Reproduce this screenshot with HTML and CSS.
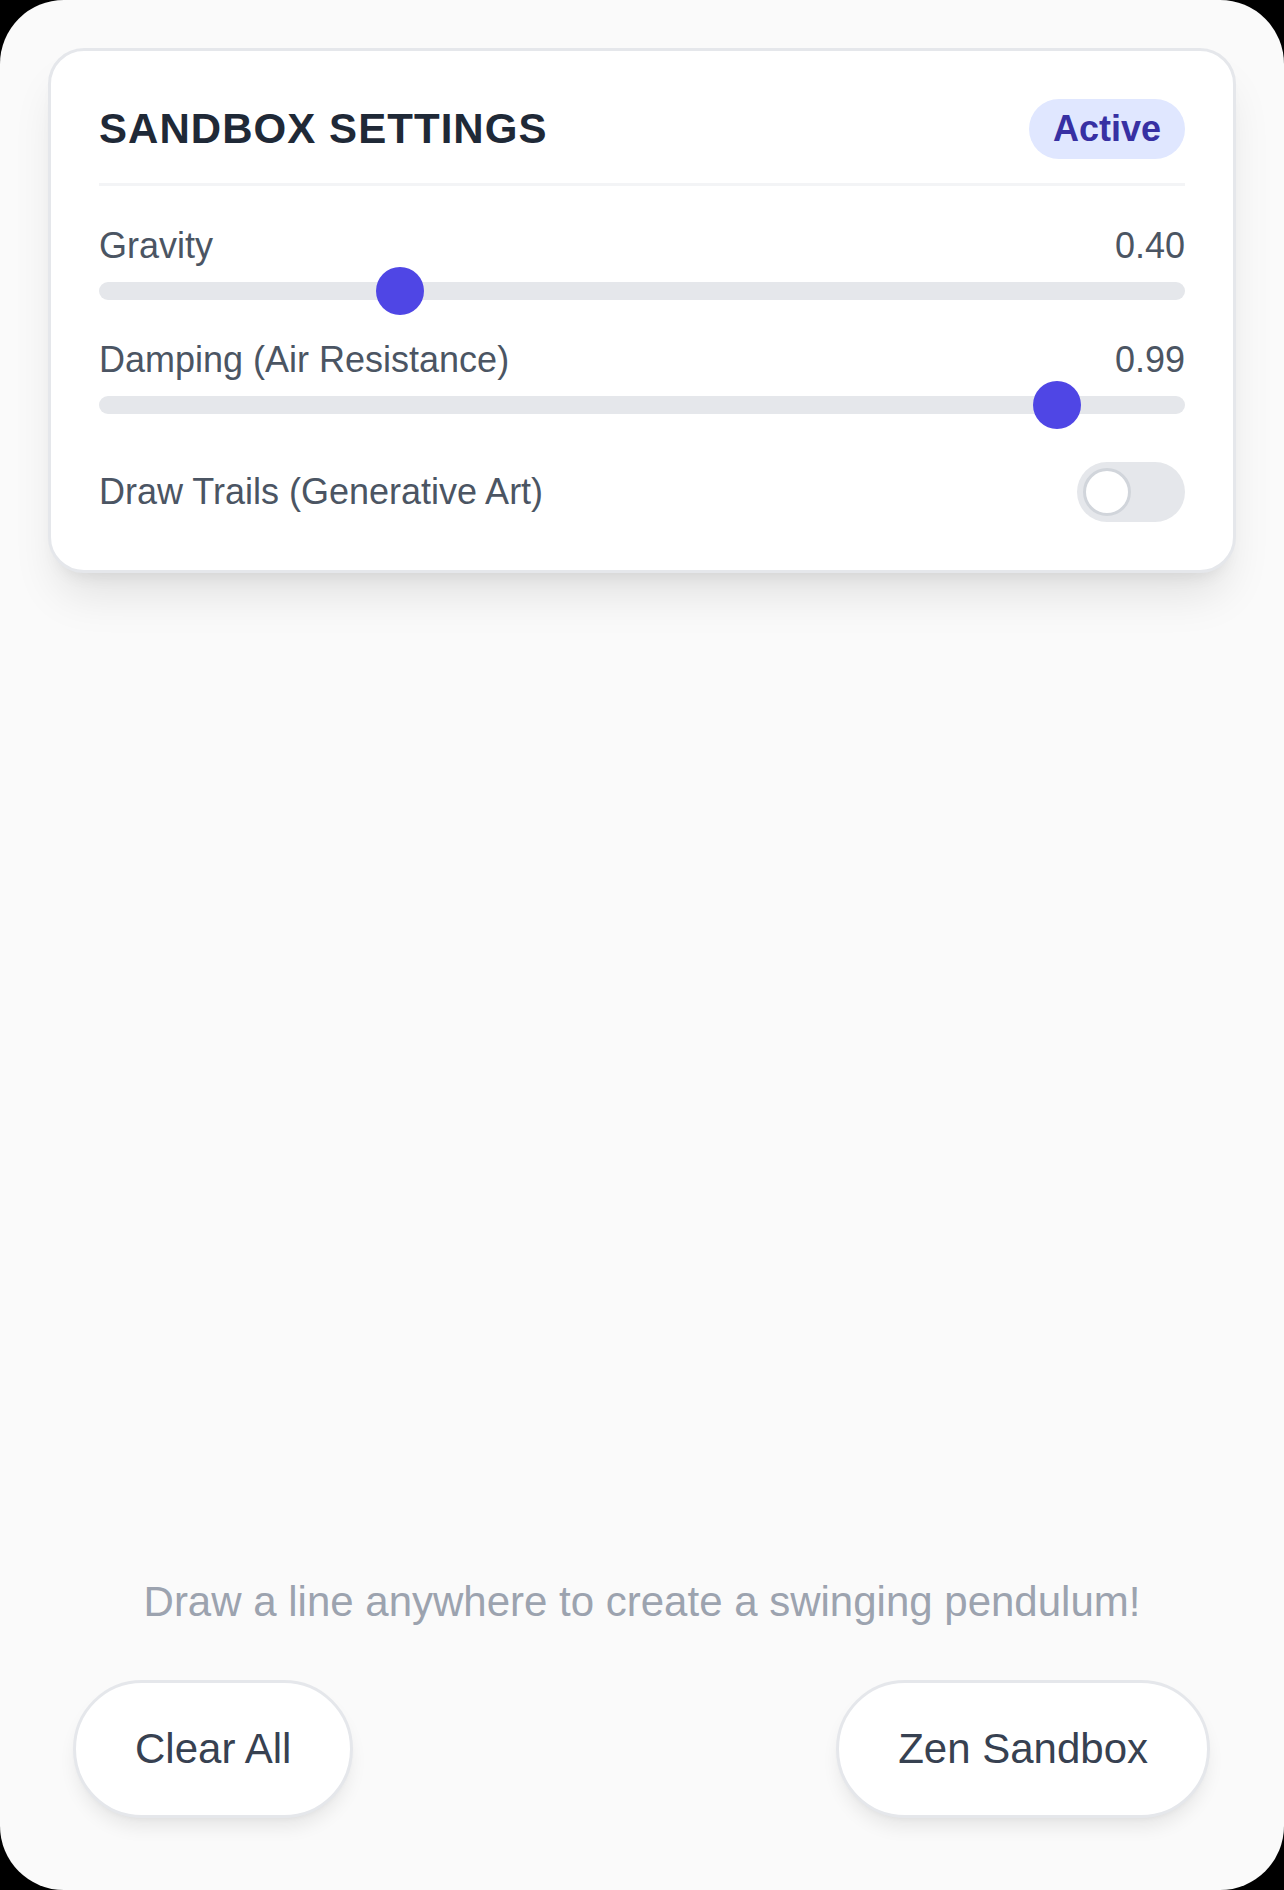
FILE: index.html
```html
<!DOCTYPE html>
<html lang="en">
<head>
<meta charset="utf-8">
<title>Zen Sandbox</title>
<link rel="stylesheet" href="styles.css">
</head>
<body>
<div class="screen">
  <div class="panel-wrap">
    <section class="panel">
      <header class="panel-header">
        <h1 class="panel-title">SANDBOX SETTINGS</h1>
        <span class="badge">Active</span>
      </header>
      <div class="settings">
        <div class="setting">
          <div class="setting-row">
            <span class="setting-label">Gravity</span>
            <span class="setting-value">0.40</span>
          </div>
          <div class="slider">
            <div class="slider-thumb" style="left: calc((100% - 48px) * 0.2667);"></div>
          </div>
        </div>
        <div class="setting">
          <div class="setting-row">
            <span class="setting-label">Damping (Air Resistance)</span>
            <span class="setting-value">0.99</span>
          </div>
          <div class="slider">
            <div class="slider-thumb" style="left: calc((100% - 48px) * 0.9);"></div>
          </div>
        </div>
        <div class="toggle-row">
          <span class="setting-label">Draw Trails (Generative Art)</span>
          <div class="toggle"><div class="toggle-knob"></div></div>
        </div>
      </div>
    </section>
  </div>
  <div class="spacer"></div>
  <p class="hint">Draw a line anywhere to create a swinging pendulum!</p>
  <div class="actions">
    <button class="pill-btn">Clear All</button>
    <button class="pill-btn">Zen Sandbox</button>
  </div>
</div>
</body>
</html>
```

FILE: styles.css
```css
* { box-sizing: border-box; }

html, body {
  margin: 0;
  padding: 0;
  background: #000;
}

body {
  font-family: "Liberation Sans", Arial, sans-serif;
}

.screen {
  width: 1284px;
  height: 1890px;
  background: #fafafa;
  border-radius: 64px;
  overflow: hidden;
  display: flex;
  flex-direction: column;
}

.panel-wrap {
  padding: 48px 48px 0;
}

.panel {
  background: #ffffff;
  border: 3px solid #e5e7eb;
  border-radius: 36px;
  padding: 48px;
  box-shadow: 0 30px 45px -9px rgba(0, 0, 0, 0.1), 0 12px 18px -12px rgba(0, 0, 0, 0.1);
}

.panel-header {
  display: flex;
  align-items: center;
  justify-content: space-between;
  padding-bottom: 24px;
  border-bottom: 3px solid #f3f4f6;
}

.panel-title {
  margin: 0;
  font-size: 42px;
  line-height: 60px;
  font-weight: 700;
  letter-spacing: 0.025em;
  color: #1f2937;
}

.badge {
  display: inline-block;
  background: #e0e7ff;
  color: #3730a3;
  font-size: 36px;
  line-height: 48px;
  font-weight: 700;
  padding: 6px 24px;
  border-radius: 9999px;
}

.settings {
  margin-top: 36px;
  display: flex;
  flex-direction: column;
  gap: 36px;
}

.setting-row {
  display: flex;
  justify-content: space-between;
  align-items: center;
  margin-bottom: 12px;
}

.setting-label,
.setting-value {
  font-size: 36px;
  line-height: 48px;
  color: #4b5563;
}

.slider {
  position: relative;
  height: 18px;
  border-radius: 9px;
  background: #e5e7eb;
}

.slider-thumb {
  position: absolute;
  top: -15px;
  width: 48px;
  height: 48px;
  border-radius: 50%;
  background: #4f46e5;
}

.toggle-row {
  display: flex;
  justify-content: space-between;
  align-items: center;
  padding-top: 12px;
}

.toggle {
  width: 108px;
  height: 60px;
  border-radius: 30px;
  background: #e5e7eb;
  padding: 6px;
}

.toggle-knob {
  width: 48px;
  height: 48px;
  border-radius: 50%;
  background: #ffffff;
  border: 3px solid #d1d5db;
}

.spacer {
  flex: 1;
}

.hint {
  margin: 0 0 48px;
  text-align: center;
  font-size: 42px;
  line-height: 60px;
  color: #9ca3af;
}

.actions {
  display: flex;
  justify-content: space-between;
  align-items: flex-start;
  padding: 0 74px 72px 73px;
}

.pill-btn {
  font-family: "Liberation Sans", Arial, sans-serif;
  font-size: 42px;
  line-height: 60px;
  color: #374151;
  background: #ffffff;
  border: 3px solid #e5e7eb;
  border-radius: 9999px;
  padding: 36px 59px;
  box-shadow: 0 12px 18px -3px rgba(0, 0, 0, 0.08), 0 4px 6px -4px rgba(0, 0, 0, 0.06);
}
```
